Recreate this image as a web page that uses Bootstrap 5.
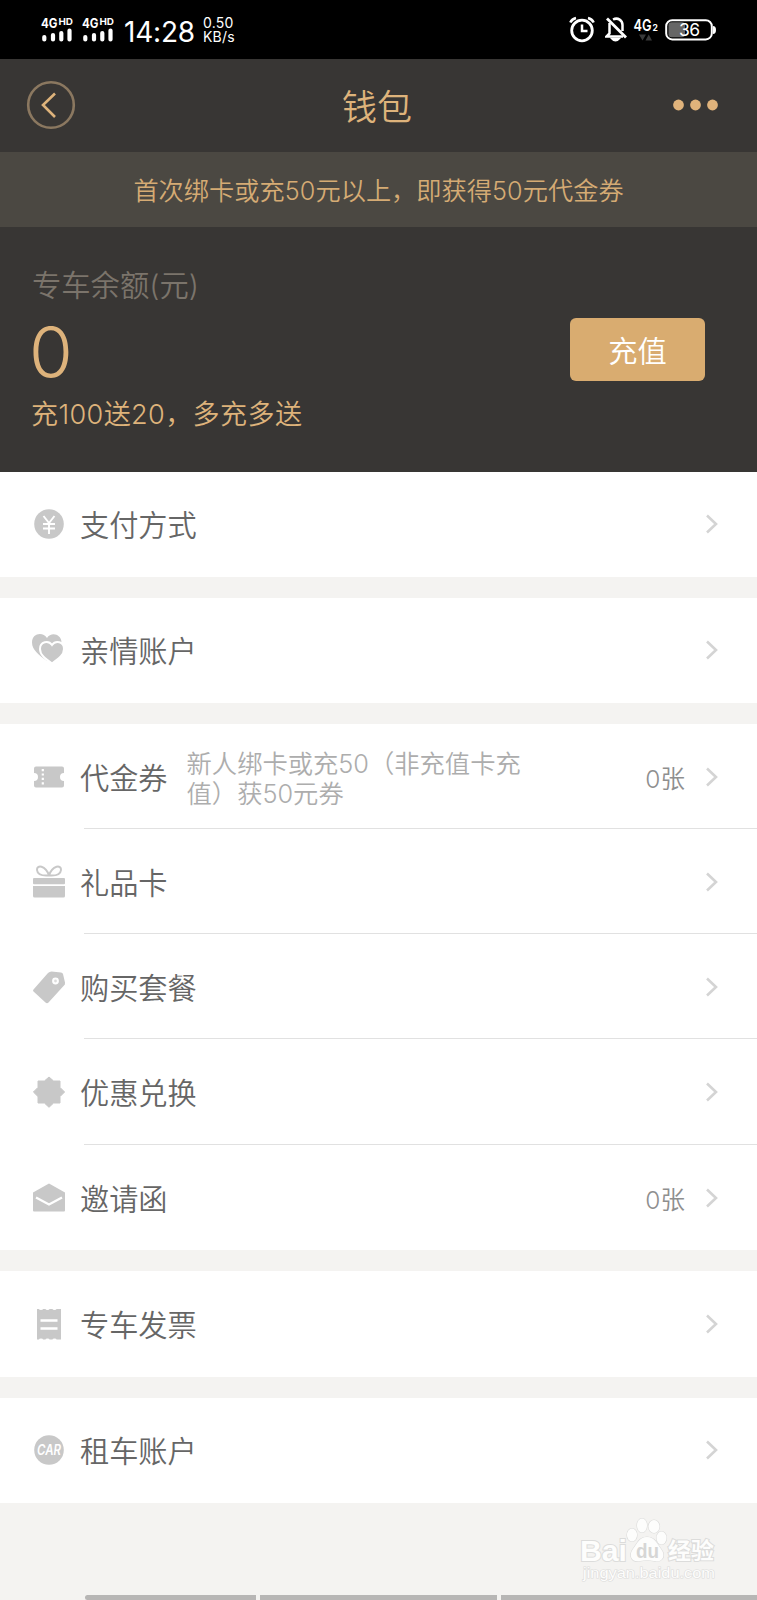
<!DOCTYPE html>
<html lang="zh-CN">
<head>
<meta charset="utf-8">
<meta name="viewport" content="width=device-width, initial-scale=1">
<title>钱包</title>
<link rel="stylesheet" href="https://cdn.jsdelivr.net/npm/bootstrap@5.3.0/dist/css/bootstrap.min.css">
<style>
  body { background: #f4f3f1; font-family: Inter, "Noto Sans CJK SC", sans-serif; font-weight: 350; color: #666; height: 1600px; overflow: hidden; }
  .gold { color: #deb37b; }
  .status { height: 59px; background: #000; color: #fff; padding: 0 41px 0 41px; }
  .signal { width: 32px; height: 28px; overflow: visible; margin-right: 9px; }
  .clock { font-size: 28px; font-weight: 400; line-height: 30px; letter-spacing: -.2px; margin-left: 1px; }
  .speed { font-size: 14px; line-height: 14px; font-weight: 400; letter-spacing: .2px; }
  .topbar { height: 93px; background: #383634; padding: 0 38px 2px 26px; }
  .page-name { font-size: 35px; line-height: 40px; padding: 4px 0 0 5px; }
  .promo { height: 75px; background: #4b4842; font-size: 25.2px; color: #d5ab74; line-height: 75px; letter-spacing: .05px; padding-top: 2px; }
  .balance { height: 244.5px; background: #383634; padding: 40px 52px 0 32px; }
  .balance-label { font-size: 29.3px; line-height: 38px; color: #7b746b; }
  .amount { font-size: 71px; line-height: 76px; margin-top: 9px; margin-left: -3px; }
  .bonus { font-size: 27.1px; line-height: 36px; margin-top: 7px; letter-spacing: .35px; margin-left: -1px; }
  .recharge { width: 135px; height: 63px; background: #d9ac70; border-radius: 6px; color: #fff; font-size: 29.3px; font-weight: 350; margin-top: 51px; border: 0; padding: 4px 0 0; }
  .group + .group { margin-top: 21px; }
  .item { height: 105.25px; padding: 0 37px 0 0; border: 0; background: #fff; color: inherit; border-radius: 0; }
  .item-icon { width: 36px; height: 36px; margin-left: 31px; fill: #c8c8c8; flex: none; }
  .item-body { margin-left: 13px; height: 100%; padding-top: 4px; }
  .label-text { font-size: 29.2px; line-height: 40px; white-space: nowrap; }
  .ruled { background: linear-gradient(#e1e1e1,#e1e1e1) no-repeat 84px 100%/100% 1.3px #fff; }
  .hint { font-size: 25.3px; line-height: 29.3px; color: #adadad; margin-left: 19px; width: 340px; white-space: nowrap; }
  .count { font-size: 24.5px; color: #8f8f8f; margin-right: 19px; padding-top: 5px; }
  .chev { width: 16px; height: 22px; flex: none; fill: none; stroke: #d4d4d4; stroke-width: 2.6; }
  .watermark { right: 40px; top: 1516px; }
  .navstrip { top: 1595px; left: 84.5px; right: 0; gap: 4px; height: 5px; }
  .navstrip span { background: #b7b6b5; }
  .navstrip span:first-child { border-radius: 3px 0 0 3px; }
</style>
</head>
<body>
<svg width="0" height="0" class="position-absolute">
  <symbol id="chev" viewBox="0 0 16 22"><path d="M3 2.500l9 8.500-9 8.500"/></symbol>
</svg>

<header class="status d-flex align-items-center">
  <svg class="signal" viewBox="0 0 32 28">
    <text x="0" y="11.500" font-family="Inter" font-weight="700" font-size="13" fill="#fff" textLength="16.500" lengthAdjust="spacingAndGlyphs">4G</text>
    <text x="17.500" y="8.500" font-family="Inter" font-weight="700" font-size="9.500" fill="#fff" textLength="14.500" lengthAdjust="spacingAndGlyphs">HD</text>
    <path d="M3.300 21v2.500M12 19v4.500M20.300 17v6.500M28.500 14.500v9" stroke="#fff" stroke-width="4.200" stroke-linecap="round"/>
  </svg>
  <svg class="signal" viewBox="0 0 32 28">
    <text x="0" y="11.500" font-family="Inter" font-weight="700" font-size="13" fill="#fff" textLength="16.500" lengthAdjust="spacingAndGlyphs">4G</text>
    <text x="17.500" y="8.500" font-family="Inter" font-weight="700" font-size="9.500" fill="#fff" textLength="14.500" lengthAdjust="spacingAndGlyphs">HD</text>
    <path d="M3.300 21v2.500M12 19v4.500M20.300 17v6.500M28.500 14.500v9" stroke="#fff" stroke-width="4.200" stroke-linecap="round"/>
  </svg>
  <span class="clock pt-1">14:28</span>
  <span class="speed ms-2">0.50<br>KB/s</span>
  <svg class="ms-auto" width="26" height="27" viewBox="0 0 26 27" fill="none" stroke="#fff">
    <circle cx="13" cy="14.500" r="10.300" stroke-width="2.800"/><path d="M13 8.500v6.500h5.500" stroke-width="2.500"/><path d="M1.300 6.500Q3 3 7 2M24.700 6.500Q23 3 19 2" stroke-width="2.500"/>
  </svg>
  <svg style="margin-left:10px" width="22" height="27" viewBox="0 0 22 27" fill="none" stroke="#fff" stroke-width="2.500">
    <path d="M4.500 7v10.500L1.500 20.500h16.500M8 3.500C13 1 17.500 4.500 17.500 9v6"/><path d="M2 2.500l19 19" stroke-width="2.800"/><path d="M6.500 22.500q4 4.500 8 0z" fill="#fff" stroke-width="1.500"/>
  </svg>
  <svg style="margin-left:6px" width="26" height="27" viewBox="0 0 26 27">
    <text x="0.500" y="14.500" font-family="Inter" font-weight="600" font-size="16" fill="#fff" textLength="18" lengthAdjust="spacingAndGlyphs">4G</text>
    <text x="19.500" y="14.500" font-family="Inter" font-weight="700" font-size="8.500" fill="#fff">2</text>
    <path d="M6 18.500h7l-3.500 6zM12.500 24.500h6.500l-3.250-6z" fill="#3a3a3a"/>
  </svg>
  <svg style="margin-left:6px" width="51" height="22" viewBox="0 0 51 22">
    <rect x="3.500" y="3.300" width="16.500" height="15" rx="3" fill="#666"/><rect x="1.200" y="1.200" width="45.600" height="19.200" rx="6" fill="none" stroke="#fff" stroke-width="2"/><path d="M48 7q3 0 3 4t-3 4z" fill="#fff"/>
    <text x="24.500" y="17" text-anchor="middle" font-family="Inter" font-weight="400" font-size="17.500" textLength="21" fill="#fff">36</text>
  </svg>
</header>

<nav class="topbar d-flex align-items-center justify-content-between gold">
  <svg width="50" height="50" viewBox="0 0 50 50" fill="none">
    <circle cx="25" cy="25" r="22.800" stroke="#8b7860" stroke-width="2.600"/><path d="M29 13.500L17 25l12 12" stroke="#deb37b" stroke-width="2.600"/>
  </svg>
  <span class="page-name">钱包</span>
  <svg width="46" height="12" viewBox="0 0 46 12" fill="#e0b37b"><circle cx="5.500" cy="6" r="5.400"/><circle cx="22.500" cy="6" r="5.400"/><circle cx="39.500" cy="6" r="5.400"/></svg>
</nav>

<div class="promo text-center">首次绑卡或充50元以上，即获得50元代金券</div>

<section class="balance d-flex justify-content-between gold">
  <div>
    <div class="balance-label">专车余额(元)</div>
    <div class="amount">0</div>
    <div class="bonus">充100送20，多充多送</div>
  </div>
  <button class="btn recharge">充值</button>
</section>

<main>
  <div class="group">
    <a class="item d-flex align-items-center text-decoration-none">
      <svg class="item-icon" viewBox="0 0 36 36"><circle cx="18" cy="18" r="14.800"/><path d="M12.500 10l5.500 7 5.500-7M18 17v11M12 18h12M12 22.500h12" fill="none" stroke="#fff" stroke-width="1.900"/></svg>
      <div class="item-body d-flex align-items-center flex-fill"><span class="label-text">支付方式</span></div>
      <svg class="chev"><use href="#chev"/></svg>
    </a>
  </div>
  <div class="group">
    <a class="item d-flex align-items-center text-decoration-none">
      <svg class="item-icon" viewBox="0 0 36 36"><path d="M16 29C8 23 1 18 1 10.500 1 1 12-.500 16 6c4-6.500 14.500-4 14.500 4.500C30.500 18 24 24 16 29z"/><path d="M21 31.500c-7-5-12-8.500-12-14.500C9 9.500 17.500 8 21 13c3.500-5 12-3.500 12 4 0 6-5 9.500-12 14.500z" stroke="#fff" stroke-width="2"/></svg>
      <div class="item-body d-flex align-items-center flex-fill"><span class="label-text">亲情账户</span></div>
      <svg class="chev"><use href="#chev"/></svg>
    </a>
  </div>
  <div class="group">
    <a class="item ruled d-flex align-items-center text-decoration-none">
      <svg class="item-icon" viewBox="0 0 36 36"><path d="M5 7.500h26q2 0 2 2v4.500a4 4 0 0 0 0 8v4.500q0 2-2 2H5q-2 0-2-2V22a4 4 0 0 0 0-8V9.500q0-2 2-2z"/><path d="M11.800 10v17" stroke="#fff" stroke-width="2.200" stroke-dasharray="2.200 2.200"/></svg>
      <div class="item-body d-flex align-items-center flex-fill"><span class="label-text">代金券</span><span class="hint">新人绑卡或充50（非充值卡充<br>值）获50元券</span></div>
      <span class="count">0张</span>
      <svg class="chev"><use href="#chev"/></svg>
    </a>
    <a class="item ruled d-flex align-items-center text-decoration-none">
      <svg class="item-icon" viewBox="0 0 36 36"><rect x="2" y="14" width="32" height="6.300" rx="1"/><path d="M2 22h32v10q0 1.500-1.500 1.500h-29Q2 33.500 2 32z"/><path d="M18 11.500C14.500 1 5.500.500 6 6c.500 4.500 6 6 12 5.500C21.500 1 30.500.500 30 6c-.500 4.500-6 6-12 5.500z" fill="none" stroke="#c8c8c8" stroke-width="2"/></svg>
      <div class="item-body d-flex align-items-center flex-fill"><span class="label-text">礼品卡</span></div>
      <svg class="chev"><use href="#chev"/></svg>
    </a>
    <a class="item ruled d-flex align-items-center text-decoration-none">
      <svg class="item-icon" viewBox="0 0 36 36"><path d="M2.500 20.500L17 4q1.500-1.500 3.500-1.500l9.500 1q1.500 0 2 1.500l2 8.500q.500 2-1.500 3.500l-15 16.500q-1.500 1.500-3 0L2.500 22.500q-1-1 0-2z"/><circle cx="24.500" cy="12" r="2.400" stroke="#fff" stroke-width="2" fill="#ddd"/></svg>
      <div class="item-body d-flex align-items-center flex-fill"><span class="label-text">购买套餐</span></div>
      <svg class="chev"><use href="#chev"/></svg>
    </a>
    <a class="item ruled d-flex align-items-center text-decoration-none">
      <svg class="item-icon" viewBox="0 0 36 36"><path d="M18 3l4.600 4H29v6.400l4.600 4.600L29 22.600V29h-6.400L18 33.300 13.400 29H7v-6.400L2.400 18 7 13.400V7h6.400z" stroke="#c8c8c8" stroke-width="1" stroke-linejoin="round"/></svg>
      <div class="item-body d-flex align-items-center flex-fill"><span class="label-text">优惠兑换</span></div>
      <svg class="chev"><use href="#chev"/></svg>
    </a>
    <a class="item d-flex align-items-center text-decoration-none">
      <svg class="item-icon" viewBox="0 0 36 36"><path d="M18 3.500l16 9v18q0 1-1 1H3q-1 0-1-1v-18z"/><path d="M5 17.500l13 7 13-7" fill="none" stroke="#fff" stroke-width="2.300"/></svg>
      <div class="item-body d-flex align-items-center flex-fill"><span class="label-text">邀请函</span></div>
      <span class="count">0张</span>
      <svg class="chev"><use href="#chev"/></svg>
    </a>
  </div>
  <div class="group">
    <a class="item d-flex align-items-center text-decoration-none">
      <svg class="item-icon" viewBox="0 0 36 36"><path d="M6 3h2a2 1 0 0 0 4 0h2.500a2 1 0 0 0 4 0h3a2 1 0 0 0 4 0H30v30.500h-4.500a2 1 0 0 0-4 0h-3a2 1 0 0 0-4 0H12a2 1 0 0 0-4 0H6z"/><path d="M9.500 14.500h17M9.500 22.500h17" stroke="#fff" stroke-width="2.300"/></svg>
      <div class="item-body d-flex align-items-center flex-fill"><span class="label-text">专车发票</span></div>
      <svg class="chev"><use href="#chev"/></svg>
    </a>
  </div>
  <div class="group">
    <a class="item d-flex align-items-center text-decoration-none">
      <svg class="item-icon" viewBox="0 0 36 36"><circle cx="18" cy="18" r="14.800"/><text x="6" y="23" font-family="Inter" font-size="14" font-weight="600" font-style="italic" fill="#fff" textLength="24" lengthAdjust="spacingAndGlyphs">CAR</text></svg>
      <div class="item-body d-flex align-items-center flex-fill"><span class="label-text">租车账户</span></div>
      <svg class="chev"><use href="#chev"/></svg>
    </a>
  </div>
</main>

<svg class="watermark position-absolute" width="138" height="68" viewBox="0 0 138 68" fill="#fdfdfc" stroke="#dcdcdb" stroke-width="1.200" paint-order="stroke">
  <g font-family="Liberation Sans" font-weight="700" stroke-width="2">
    <text x="1" y="44.500" font-size="30" textLength="47" lengthAdjust="spacingAndGlyphs">Bai</text>
    <text x="89" y="43" font-size="22.500" font-family="Noto Sans CJK SC" textLength="46" lengthAdjust="spacingAndGlyphs">经验</text>
    <text x="4" y="62" font-size="15.500" font-weight="400" stroke-width="1.200" textLength="132" lengthAdjust="spacingAndGlyphs">jingyan.baidu.com</text>
  </g>
  <ellipse cx="53" cy="19" rx="5" ry="6.500"/><ellipse cx="63" cy="9.500" rx="5" ry="7"/><ellipse cx="75" cy="10.500" rx="5.500" ry="6.500"/><ellipse cx="82.500" cy="22" rx="5" ry="6.500"/>
  <path d="M68 21c8 0 10 7 14 12 6 8 0 14-7 12q-7-1.500-14 0c-8 2-12-5-7-12 4-5 6-12 14-12z"/>
  <text x="57" y="42" font-family="Liberation Sans" font-weight="700" font-size="20" fill="#d6d6d5" stroke="none" textLength="23" lengthAdjust="spacingAndGlyphs">du</text>
</svg>

<div class="navstrip d-flex position-absolute">
  <span style="width:171.5px"></span><span style="width:237px"></span><span class="flex-fill"></span>
</div>
<script src="https://cdn.jsdelivr.net/npm/bootstrap@5.3.0/dist/js/bootstrap.bundle.min.js"></script>
</body>
</html>
